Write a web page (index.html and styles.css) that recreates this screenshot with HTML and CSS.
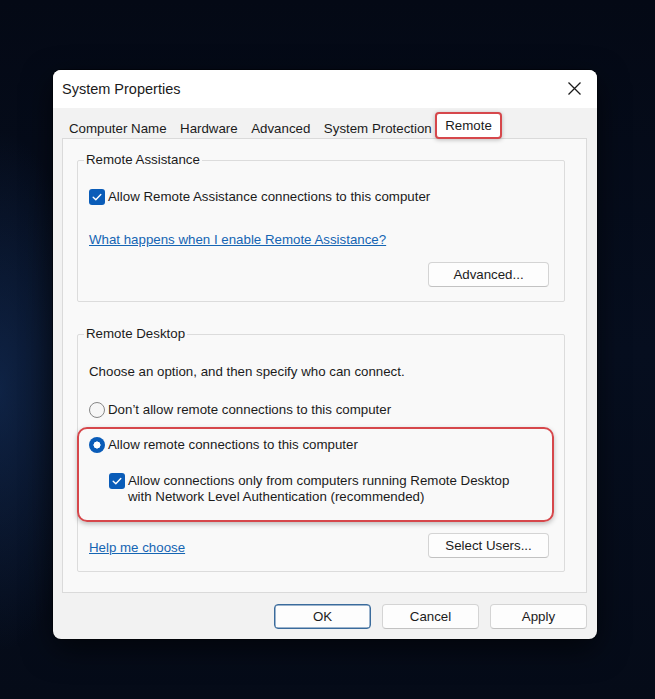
FILE: index.html
```html
<!DOCTYPE html>
<html lang="en">
<head>
<meta charset="utf-8">
<title>System Properties</title>
<link rel="stylesheet" href="styles.css">
</head>
<body>
<div class="dialog">
  <div class="titlebar">
    <span class="title">System Properties</span>
    <svg class="close" width="13" height="13" viewBox="0 0 13 13"><path d="M0.5 0.5 L12.5 12.5 M12.5 0.5 L0.5 12.5" stroke="#1b1b1b" stroke-width="1.3" fill="none"/></svg>
  </div>
  <div class="content">
    <div class="tabs">
      <span class="tab">Computer Name</span>
      <span class="tab">Hardware</span>
      <span class="tab">Advanced</span>
      <span class="tab">System Protection</span>
      <span class="tab active">Remote</span>
    </div>
    <div class="panel">
      <fieldset class="group">
        <legend>Remote Assistance</legend>
        <div class="group-body g1">
          <div class="opt">
            <span class="checkbox"><svg width="16" height="16" viewBox="0 0 16 16"><path d="M4.2 8.3 L6.8 10.8 L11.8 5.6" stroke="#fff" stroke-width="1.4" fill="none" stroke-linecap="round" stroke-linejoin="round"/></svg></span>
            <span>Allow Remote Assistance connections to this computer</span>
          </div>
          <a class="link ra-link" href="#">What happens when I enable Remote Assistance?</a>
          <div class="btn-row">
            <button class="btn wide">Advanced...</button>
          </div>
        </div>
      </fieldset>
      <fieldset class="group g2">
        <legend>Remote Desktop</legend>
        <div class="group-body b2">
          <div class="line">Choose an option, and then specify who can connect.</div>
          <div class="opt r1">
            <span class="radio"></span>
            <span>Don’t allow remote connections to this computer</span>
          </div>
          <div class="highlight">
            <div class="opt">
              <span class="radio on"></span>
              <span>Allow remote connections to this computer</span>
            </div>
            <div class="opt nla">
              <span class="checkbox"><svg width="16" height="16" viewBox="0 0 16 16"><path d="M4.2 8.3 L6.8 10.8 L11.8 5.6" stroke="#fff" stroke-width="1.4" fill="none" stroke-linecap="round" stroke-linejoin="round"/></svg></span>
              <span>Allow connections only from computers running Remote Desktop<br>with Network Level Authentication (recommended)</span>
            </div>
          </div>
          <div class="bottom-row">
            <a class="link help" href="#">Help me choose</a>
            <button class="btn wide">Select Users...</button>
          </div>
        </div>
      </fieldset>
    </div>
    <div class="footer">
      <button class="btn foot default">OK</button>
      <button class="btn foot">Cancel</button>
      <button class="btn foot">Apply</button>
    </div>
  </div>
</div>
</body>
</html>
```
FILE: styles.css
```css
* { box-sizing: border-box; }
html, body { margin: 0; height: 100%; }
body {
  background:
    radial-gradient(ellipse 90px 260px at 0% 56%, rgba(22, 52, 100, 0.55), rgba(22, 52, 100, 0) 100%),
    linear-gradient(180deg, #040915 0%, #060e1f 50%, #050b18 100%);
  padding: 70px 0 0 53px;
  font-family: "Liberation Sans", Arial, sans-serif;
  font-size: 13.3px;
  color: #1b1b1b;
  overflow: hidden;
}
.dialog {
  width: 544px;
  height: 569px;
  border-radius: 8px;
  background: #f2f2f2;
  overflow: hidden;
  box-shadow: 0 0 0 1px rgba(0,0,0,0.4), 0 10px 30px rgba(0,0,0,0.6);
}
.titlebar {
  height: 38px;
  background: #ffffff;
  display: flex;
  align-items: center;
  padding: 0 0 1px 9px;
}
.title {
  font-size: 14.5px;
  color: #1b1b1b;
}
.close { margin-left: auto; margin-right: 16px; }
.content { padding: 0 10px 9px 9px; }
.tabs {
  height: 30px;
  display: flex;
  align-items: flex-end;
  gap: 1.5px;
  padding-left: 1px;
}
.tab {
  padding: 0 6px 1px;
  line-height: 16px;
  white-space: nowrap;
}
.tab.active {
  position: relative;
  z-index: 1;
  margin-left: -4px;
  margin-bottom: -1px;
  padding: 4px 8px 3px;
  border: 2px solid #d6474b;
  border-radius: 4px;
  background: #ffffff;
  box-shadow: 0 1px 4px rgba(0,0,0,0.25);
}
.panel {
  border: 1px solid #dadada;
  background: #f9f9f9;
  padding: 13px 21px 20px 14px;
}
.group {
  margin: 0;
  padding: 0;
  border: 1px solid #dcdcdc;
  border-radius: 2px;
  min-width: 0;
}
.group legend {
  margin-left: 6px;
  padding: 0 2px;
  line-height: 16px;
}
.g2 { margin-top: 24px; }
.group-body { padding: 0 15px 14px 11px; }
.g1 { padding-top: 21px; }
.b2 { padding-top: 22px; padding-bottom: 13px; }
.opt {
  display: flex;
  align-items: flex-start;
  gap: 3px;
  line-height: 16px;
}
.line { line-height: 16px; }
.checkbox {
  flex: none;
  width: 16px;
  height: 16px;
  border-radius: 3px;
  background: #0a5cb8;
  display: flex;
}
.radio {
  flex: none;
  width: 16px;
  height: 16px;
  border-radius: 50%;
  border: 1px solid #868686;
  background: #f6f6f6;
}
.radio.on {
  border: none;
  background: radial-gradient(circle, #ffffff 0 3.3px, #0a5cb8 3.8px);
}
.link {
  display: block;
  color: #1565b3;
  text-decoration: underline;
  line-height: 16px;
  width: max-content;
}
.ra-link { margin-top: 27px; }
.btn-row {
  margin-top: 14px;
  display: flex;
  justify-content: flex-end;
}
.btn {
  font-family: "Liberation Sans", Arial, sans-serif;
  font-size: 13.3px;
  color: #1b1b1b;
  height: 25px;
  padding: 0;
  background: #fdfdfd;
  border: 1px solid #d4d4d4;
  border-bottom-color: #c2c2c2;
  border-radius: 4px;
}
.btn.wide { width: 121px; }
.r1 { margin-top: 22px; }
.highlight {
  margin: 9px -5px 0 -12px;
  padding: 8px 10px 15px 10px;
  border: 2px solid #d6474b;
  border-radius: 10px;
  box-shadow: 0 2px 5px rgba(0,0,0,0.25);
}
.nla { margin-top: 20px; margin-left: 20px; }
.bottom-row {
  margin-top: 11px;
  display: flex;
  justify-content: space-between;
  align-items: flex-end;
}
.help { margin-bottom: 2px; }
.footer {
  margin-top: 11px;
  display: flex;
  justify-content: flex-end;
  gap: 11px;
}
.btn.foot { width: 97px; }
.btn.default {
  border: 1px solid #3a6b9c;
  box-shadow: inset 0 0 0 0.5px #3a6b9c;
}
```
